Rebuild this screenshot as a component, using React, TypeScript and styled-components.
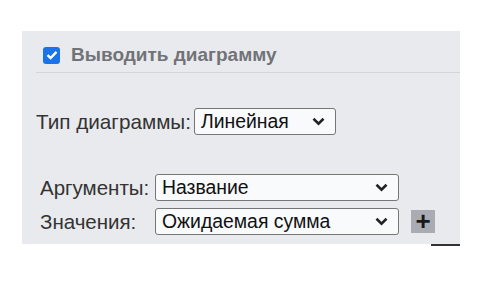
import { createGlobalStyle, styled } from "styled-components";

const GlobalStyle = createGlobalStyle`
  body {
    margin: 0;
    background: #fff;
    font-family: "Liberation Sans", Arial, sans-serif;
    color: #333;
  }
`;

const Chevron = () => (
  <svg width="13" height="9" viewBox="0 0 13 9">
    <path d="M1.5 1.8 L6.5 6.6 L11.5 1.8" fill="none" stroke="#222" strokeWidth="2.6" />
  </svg>
);

interface SelectProps {
  value: string;
  width: number;
}

const Select: React.FC<SelectProps> = ({ value, width }) => (
  <SelectBox $width={width}>
    <span>{value}</span>
    <Chevron />
  </SelectBox>
);

export default function App() {
  return (
    <Page>
      <GlobalStyle />
      <Panel>
        <Header>
          <CheckLabel>
            <CheckBox>
              <svg width="12" height="10" viewBox="0 0 12 10">
                <path d="M1.5 5.2 L4.6 8 L10.5 1.8" fill="none" stroke="#fff" strokeWidth="2.4" />
              </svg>
            </CheckBox>
            Выводить диаграмму
          </CheckLabel>
        </Header>

        <TypeRow>
          <Label>Тип диаграммы:</Label>
          <Select value="Линейная" width={142} />
        </TypeRow>

        <Fields>
          <FieldRow>
            <FieldLabel>Аргументы:</FieldLabel>
            <Select value="Название" width={244} />
          </FieldRow>
          <FieldRow>
            <FieldLabel>Значения:</FieldLabel>
            <Select value="Ожидаемая сумма" width={244} />
            <AddButton>+</AddButton>
          </FieldRow>
        </Fields>
      </Panel>
      <Underline />
    </Page>
  );
}

const Page = styled.div`
  width: 438px;
  padding: 31px 0 0 22px;
`;

const Panel = styled.div`
  height: 213px;
  background: #e8eaed;
  padding-left: 14px;
  display: flex;
  flex-direction: column;
`;

const Header = styled.div`
  height: 42px;
  box-sizing: border-box;
  border-bottom: 1px solid #d3d5d9;
  padding: 13px 0 0 7px;
`;

const CheckLabel = styled.label`
  display: flex;
  align-items: center;
  gap: 11px;
  font-size: 19px;
  font-weight: 700;
  color: #717377;
`;

const CheckBox = styled.span`
  width: 17px;
  height: 17px;
  border-radius: 3px;
  background: #1a73e8;
  display: flex;
  align-items: center;
  justify-content: center;
`;

const TypeRow = styled.div`
  display: flex;
  align-items: center;
  gap: 3px;
  margin-top: 35px;
`;

const Label = styled.span`
  font-size: 20.7px;
  color: #333;
`;

const Fields = styled.div`
  display: flex;
  flex-direction: column;
  gap: 7px;
  margin-top: 39px;
  padding-left: 4px;
`;

const FieldRow = styled.div`
  display: flex;
  align-items: center;
`;

const FieldLabel = styled.span`
  width: 115px;
  font-size: 20.5px;
  color: #333;
`;

const SelectBox = styled.div<{ $width: number }>`
  width: ${(p) => p.$width}px;
  height: 27px;
  box-sizing: border-box;
  border: 1px solid #767676;
  border-radius: 3px;
  background: #f8fafc;
  display: flex;
  align-items: center;
  justify-content: space-between;
  padding: 0 10px 0 6px;
  font-size: 19.4px;
  color: #111;
`;

const AddButton = styled.div`
  width: 24px;
  height: 23px;
  margin-left: 12px;
  background: #a9adb3;
  color: #1a1a1a;
  font-size: 26px;
  font-weight: 700;
  line-height: 23px;
  text-align: center;
`;

const Underline = styled.div`
  width: 29px;
  height: 2px;
  margin-left: 409px;
  background: #333;
`;
